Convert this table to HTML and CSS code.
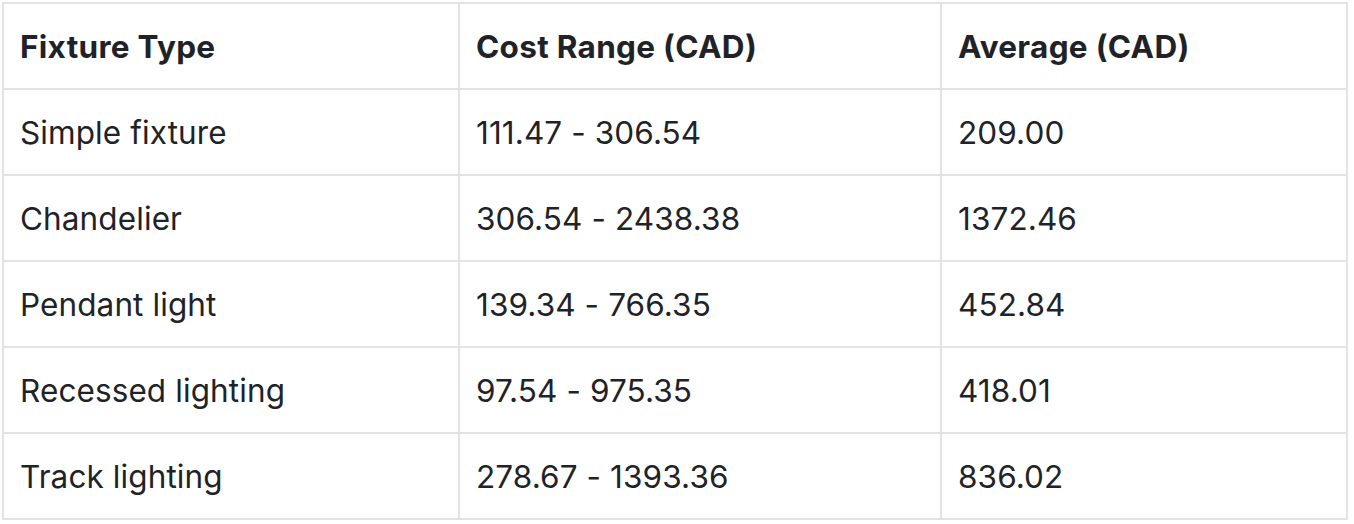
FILE: index.html
```html
<!DOCTYPE html>
<html lang="en">
<head>
<meta charset="utf-8">
<title>Fixture Costs</title>
<link rel="stylesheet" href="styles.css">
</head>
<body>
<table class="cost-table">
  <colgroup>
    <col class="col-type">
    <col class="col-range">
    <col class="col-avg">
  </colgroup>
  <thead>
    <tr><th>Fixture Type</th><th>Cost Range (CAD)</th><th>Average (CAD)</th></tr>
  </thead>
  <tbody>
    <tr><td>Simple fixture</td><td>111.47 - 306.54</td><td>209.00</td></tr>
    <tr><td>Chandelier</td><td>306.54 - 2438.38</td><td>1372.46</td></tr>
    <tr><td>Pendant light</td><td>139.34 - 766.35</td><td>452.84</td></tr>
    <tr><td>Recessed lighting</td><td>97.54 - 975.35</td><td>418.01</td></tr>
    <tr><td>Track lighting</td><td>278.67 - 1393.36</td><td>836.02</td></tr>
  </tbody>
</table>
</body>
</html>
```

FILE: styles.css
```css
html, body {
  margin: 0;
  padding: 0;
  background: #ffffff;
}
body {
  padding: 2px;
  font-family: Inter, "Liberation Sans", sans-serif;
  color: #1f2328;
}
.cost-table {
  width: 1344px;
  border-collapse: collapse;
  table-layout: fixed;
  font-size: 31.5px;
}
.col-type { width: 456px; }
.col-range { width: 482px; }
.col-avg { width: 406px; }
.cost-table th,
.cost-table td {
  border: 2px solid #e3e3e3;
  height: 86px;
  padding: 0 16px;
  box-sizing: border-box;
  text-align: left;
  vertical-align: middle;
}
.cost-table th {
  font-weight: 700;
  letter-spacing: 0.3px;
}
.cost-table td {
  font-weight: 400;
  letter-spacing: 0.1px;
}
```
